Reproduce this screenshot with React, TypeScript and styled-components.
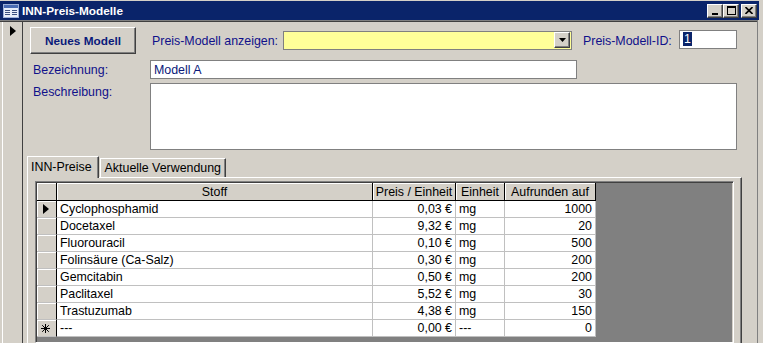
import styled, { createGlobalStyle } from 'styled-components';

const GlobalStyle = createGlobalStyle`
  html, body {
    margin: 0;
    padding: 0;
    background: #d4d0c8;
    overflow: hidden;
  }
  * {
    box-sizing: border-box;
  }
`;

interface PriceRow {
  stoff: string;
  preis: string;
  einheit: string;
  aufrunden: string;
}

const rows: PriceRow[] = [
  { stoff: 'Cyclophosphamid', preis: '0,03 €', einheit: 'mg', aufrunden: '1000' },
  { stoff: 'Docetaxel', preis: '9,32 €', einheit: 'mg', aufrunden: '20' },
  { stoff: 'Fluorouracil', preis: '0,10 €', einheit: 'mg', aufrunden: '500' },
  { stoff: 'Folinsäure (Ca-Salz)', preis: '0,30 €', einheit: 'mg', aufrunden: '200' },
  { stoff: 'Gemcitabin', preis: '0,50 €', einheit: 'mg', aufrunden: '200' },
  { stoff: 'Paclitaxel', preis: '5,52 €', einheit: 'mg', aufrunden: '30' },
  { stoff: 'Trastuzumab', preis: '4,38 €', einheit: 'mg', aufrunden: '150' },
];

const RowArrow = () => (
  <svg width="6" height="10" viewBox="0 0 6 10">
    <polygon points="0,0 6,5 0,10" fill="#000" />
  </svg>
);

const NewRowStar = () => (
  <svg width="9" height="9" viewBox="0 0 9 9" stroke="#000" strokeWidth="1">
    <line x1="4.5" y1="0" x2="4.5" y2="9" />
    <line x1="0" y1="4.5" x2="9" y2="4.5" />
    <line x1="1.2" y1="1.2" x2="7.8" y2="7.8" />
    <line x1="7.8" y1="1.2" x2="1.2" y2="7.8" />
  </svg>
);

const FormIcon = () => (
  <svg width="16" height="14" viewBox="0 0 16 14">
    <rect x="0.5" y="0.5" width="15" height="13" fill="#e8eefa" stroke="#9db0d8" />
    <rect x="1" y="1" width="14" height="3" fill="#4a6cb4" />
    <rect x="2" y="6" width="5" height="1" fill="#3a4f80" />
    <rect x="9" y="6" width="5" height="1" fill="#3a4f80" />
    <rect x="2" y="8" width="5" height="1" fill="#3a4f80" />
    <rect x="9" y="8" width="5" height="1" fill="#3a4f80" />
    <rect x="2" y="10" width="5" height="1" fill="#3a4f80" />
    <rect x="9" y="10" width="5" height="1" fill="#3a4f80" />
  </svg>
);

const MinGlyph = () => (
  <svg width="8" height="8" viewBox="0 0 8 8">
    <rect x="1" y="6" width="6" height="2" fill="#000" />
  </svg>
);

const MaxGlyph = () => (
  <svg width="9" height="9" viewBox="0 0 9 9">
    <rect x="0.5" y="0.5" width="8" height="8" fill="none" stroke="#000" />
    <rect x="0" y="0" width="9" height="2" fill="#000" />
  </svg>
);

const CloseGlyph = () => (
  <svg width="8" height="7" viewBox="0 0 8 7" stroke="#000" strokeWidth="1.6">
    <line x1="0.5" y1="0" x2="7.5" y2="7" />
    <line x1="7.5" y1="0" x2="0.5" y2="7" />
  </svg>
);

const DropGlyph = () => (
  <svg width="7" height="4" viewBox="0 0 7 4">
    <polygon points="0,0 7,0 3.5,4" fill="#000" />
  </svg>
);

export default function App() {
  return (
    <>
      <GlobalStyle />
      <Frame>
        <TitleBar>
          <FormIcon />
          <TitleText>INN-Preis-Modelle</TitleText>
          <CaptionButtons>
            <CaptionButton>
              <MinGlyph />
            </CaptionButton>
            <CaptionButton>
              <MaxGlyph />
            </CaptionButton>
            <CaptionButton $gap>
              <CloseGlyph />
            </CaptionButton>
          </CaptionButtons>
        </TitleBar>
        <Body>
          <RecordSelector>
            <RowArrow />
          </RecordSelector>
          <FormArea>
            <TopRow>
              <CommandButton>Neues Modell</CommandButton>
              <Label $width={131} $indent={16}>
                Preis-Modell anzeigen:
              </Label>
              <ComboBox>
                <DropButton>
                  <DropGlyph />
                </DropButton>
              </ComboBox>
              <Label $width={96} $indent={11}>
                Preis-Modell-ID:
              </Label>
              <IdBox>
                <Selected>1</Selected>
              </IdBox>
            </TopRow>
            <FieldRow $gap={6}>
              <Label $width={117}>Bezeichnung:</Label>
              <TextBox $width={427} $height={19}>
                Modell A
              </TextBox>
            </FieldRow>
            <FieldRow $gap={4} $top>
              <Label $width={117} $top>
                Beschreibung:
              </Label>
              <TextBox $width={587} $height={67} />
            </FieldRow>
            <TabStrip>
              <Tab $active>INN-Preise</Tab>
              <Tab>Aktuelle Verwendung</Tab>
            </TabStrip>
            <TabPanel>
              <Datasheet>
                <Grid>
                  <HeaderCell />
                  <HeaderCell>Stoff</HeaderCell>
                  <HeaderCell>Preis / Einheit</HeaderCell>
                  <HeaderCell>Einheit</HeaderCell>
                  <HeaderCell>Aufrunden auf</HeaderCell>
                  {rows.map((r, i) => (
                    <Row key={r.stoff}>
                      <SelectorCell>{i === 0 && <RowArrow />}</SelectorCell>
                      <Cell>{r.stoff}</Cell>
                      <Cell $right>{r.preis}</Cell>
                      <Cell>{r.einheit}</Cell>
                      <Cell $right>{r.aufrunden}</Cell>
                    </Row>
                  ))}
                  <Row>
                    <SelectorCell>
                      <NewRowStar />
                    </SelectorCell>
                    <Cell>---</Cell>
                    <Cell $right>0,00 €</Cell>
                    <Cell>---</Cell>
                    <Cell $right>0</Cell>
                  </Row>
                </Grid>
              </Datasheet>
            </TabPanel>
          </FormArea>
        </Body>
      </Frame>
    </>
  );
}

const Frame = styled.div`
  display: flex;
  flex-direction: column;
  width: 763px;
  height: 343px;
  padding-top: 1px;
  overflow: hidden;
  background: #d4d0c8;
  font-family: 'Liberation Sans', Arial, sans-serif;
  font-size: 12.4px;
`;

const TitleBar = styled.div`
  display: flex;
  align-items: center;
  flex-shrink: 0;
  height: 19px;
  margin-right: 4px;
  padding: 0 2px 0 3px;
  background: #0a246a;
`;

const TitleText = styled.span`
  margin-left: 3px;
  color: #fff;
  font-weight: bold;
  font-size: 11.8px;
`;

const CaptionButtons = styled.div`
  display: flex;
  margin-left: auto;
`;

const CaptionButton = styled.div<{ $gap?: boolean }>`
  display: flex;
  align-items: center;
  justify-content: center;
  width: 16px;
  height: 14px;
  margin-left: ${(p) => (p.$gap ? '2px' : '0')};
  background: #d4d0c8;
  border: 1px solid;
  border-color: #fff #404040 #404040 #fff;
  box-shadow: inset -1px -1px 0 #808080;
`;

const Body = styled.div`
  display: flex;
  flex: 1;
  min-height: 0;
  margin-right: 5px;
  border-top: 1px solid #808080;
  box-shadow: inset 0 1px 0 #404040;
  padding-top: 1px;
  border-right: 1px solid #808080;
`;

const RecordSelector = styled.div`
  display: flex;
  justify-content: center;
  width: 21px;
  margin-left: 2px;
  padding: 4px 0 0 1px;
  border-left: 1px solid #fff;
  border-right: 1px solid #404040;
`;

const FormArea = styled.div`
  display: flex;
  flex-direction: column;
  flex: 1;
  min-width: 0;
  padding-top: 5px;
`;

const TopRow = styled.div`
  display: flex;
  align-items: center;
  height: 27px;
  padding-left: 7px;
`;

const CommandButton = styled.div`
  display: flex;
  align-items: center;
  justify-content: center;
  width: 106px;
  height: 27px;
  color: #0a1a7a;
  font-weight: bold;
  font-size: 11.8px;
  background: #d4d0c8;
  border: 1px solid;
  border-color: #fff #404040 #404040 #fff;
  box-shadow: inset -1px -1px 0 #808080;
`;

const Label = styled.div<{ $width: number; $indent?: number; $top?: boolean }>`
  flex-shrink: 0;
  width: ${(p) => p.$width}px;
  margin-left: ${(p) => p.$indent ?? 0}px;
  padding-top: ${(p) => (p.$top ? '2px' : '0')};
  color: #10108a;
  white-space: nowrap;
`;

const ComboBox = styled.div`
  display: flex;
  justify-content: flex-end;
  align-items: center;
  width: 289px;
  height: 19px;
  margin-top: -1px;
  padding-right: 1px;
  background: #ffff99;
  border: 1px solid #808080;
`;

const DropButton = styled.div`
  display: flex;
  align-items: center;
  justify-content: center;
  width: 16px;
  height: 16px;
  background: #d4d0c8;
  border: 1px solid;
  border-color: #fff #404040 #404040 #fff;
  box-shadow: inset -1px -1px 0 #808080;
`;

const IdBox = styled.div`
  display: flex;
  align-items: center;
  width: 58px;
  height: 19px;
  margin-top: -3px;
  padding-left: 3px;
  background: #fff;
  border: 1px solid #808080;
`;

const Selected = styled.span`
  padding: 0 1px;
  color: #fff;
  background: #0a246a;
  line-height: 14px;
`;

const FieldRow = styled.div<{ $gap: number; $top?: boolean }>`
  display: flex;
  align-items: ${(p) => (p.$top ? 'flex-start' : 'center')};
  margin-top: ${(p) => p.$gap}px;
  padding-left: 10px;
`;

const TextBox = styled.div<{ $width: number; $height: number }>`
  display: flex;
  align-items: ${(p) => (p.$height > 20 ? 'flex-start' : 'center')};
  width: ${(p) => p.$width}px;
  height: ${(p) => p.$height}px;
  padding-left: 3px;
  color: #0a1a7a;
  background: #fff;
  border: 1px solid #808080;
`;

const TabStrip = styled.div`
  display: flex;
  align-items: flex-end;
  position: relative;
  z-index: 1;
  height: 22px;
  margin-top: 5px;
  padding-left: 4px;
`;

const Tab = styled.div<{ $active?: boolean }>`
  display: flex;
  align-items: center;
  height: ${(p) => (p.$active ? '22px' : '19px')};
  padding: ${(p) => (p.$active ? '0 6px 1px 3px' : '0 4px 0 4px')};
  margin-left: ${(p) => (p.$active ? '0' : '1px')};
  margin-bottom: ${(p) => (p.$active ? '-1px' : '0')};
  color: #000;
  background: #d4d0c8;
  border-top: 1px solid #fff;
  border-left: 1px solid #fff;
  border-right: 1px solid #404040;
  box-shadow: inset -1px 0 0 #808080;
  white-space: nowrap;
`;

const TabPanel = styled.div`
  display: flex;
  flex: 1;
  min-height: 0;
  margin: 0 15px 0 4px;
  padding: 3px 7px 0 7px;
  border-top: 1px solid #fff;
  border-left: 1px solid #fff;
  border-right: 1px solid #404040;
  box-shadow: inset -1px 0 0 #808080;
`;

const Datasheet = styled.div`
  flex: 1;
  min-width: 0;
  background: #808080;
  border: 1px solid;
  border-color: #808080 #fff #fff #808080;
  box-shadow: inset 1px 1px 0 #404040, inset -1px 0 0 #d4d0c8;
  padding: 1px 0 0 1px;
`;

const Grid = styled.div`
  display: grid;
  grid-template-columns: 20px 316px 83px 49px 91px;
  grid-template-rows: 18px;
  grid-auto-rows: 17px;
  width: 559px;
`;

const HeaderCell = styled.div`
  display: flex;
  align-items: center;
  justify-content: center;
  color: #000;
  background: #d4d0c8;
  border-right: 1px solid #000;
  border-bottom: 1px solid #000;
  box-shadow: inset 1px 1px 0 #fff;
  white-space: nowrap;
`;

const Row = styled.div`
  display: contents;
`;

const Cell = styled.div<{ $right?: boolean }>`
  display: flex;
  align-items: center;
  justify-content: ${(p) => (p.$right ? 'flex-end' : 'flex-start')};
  padding: ${(p) => (p.$right ? '0 3px 0 0' : '0 0 0 3px')};
  color: #000;
  background: #fff;
  border-right: 1px solid #c0c0c0;
  border-bottom: 1px solid #c0c0c0;
  white-space: nowrap;
`;

const SelectorCell = styled.div`
  display: flex;
  align-items: center;
  justify-content: center;
  padding-right: 2px;
  background: #d4d0c8;
  border-right: 1px solid #000;
  border-bottom: 1px solid #c0c0c0;
  box-shadow: inset 1px 1px 0 #fff;
`;
